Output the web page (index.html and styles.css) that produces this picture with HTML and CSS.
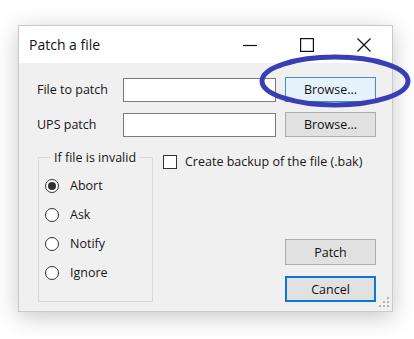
FILE: index.html
```html
<!DOCTYPE html>
<html lang="en">
<head>
    <meta charset="UTF-8">
    <meta name="viewport" content="width=device-width, initial-scale=1.0">
    <title>Patch a file</title>
    <link rel="stylesheet" href="styles.css">
</head>
<body>

    <div class="window">
        <!-- Title Bar -->
        <div class="titlebar">
            <span class="title">Patch a file</span>
            <div class="caption-btn">
                <svg width="14" height="14" viewBox="0 0 14 14"><path d="M0 7.5h14" stroke="#111" stroke-width="1.2"/></svg>
            </div>
            <div class="caption-btn">
                <svg width="14" height="14" viewBox="0 0 14 14"><rect x="0.6" y="0.6" width="12.8" height="12.8" fill="none" stroke="#111" stroke-width="1.2"/></svg>
            </div>
            <div class="caption-btn">
                <svg width="14" height="14" viewBox="0 0 14 14"><path d="M0.5 0.5L13.5 13.5M13.5 0.5L0.5 13.5" stroke="#111" stroke-width="1.2"/></svg>
            </div>
        </div>

        <!-- Dialog Body -->
        <div class="content">
            <div class="file-grid">
                <label class="field-label">File to patch</label>
                <div class="textbox"></div>
                <button class="btn btn-hover">Browse...</button>

                <label class="field-label">UPS patch</label>
                <div class="textbox"></div>
                <button class="btn">Browse...</button>
            </div>

            <div class="lower">
                <fieldset class="groupbox">
                    <legend>If file is invalid</legend>
                    <div class="radio-row"><span class="radio checked"></span>Abort</div>
                    <div class="radio-row"><span class="radio"></span>Ask</div>
                    <div class="radio-row"><span class="radio"></span>Notify</div>
                    <div class="radio-row"><span class="radio"></span>Ignore</div>
                </fieldset>

                <div class="right-col">
                    <div class="check-row"><span class="checkbox"></span>Create backup of the file (.bak)</div>
                    <div class="actions">
                        <button class="btn">Patch</button>
                        <button class="btn btn-default">Cancel</button>
                    </div>
                </div>
            </div>
        </div>

        <!-- Size Grip -->
        <svg class="grip" width="10" height="10" viewBox="0 0 10 10">
            <g fill="#b4b4b4">
                <rect x="8" y="0" width="2" height="2"/>
                <rect x="4" y="4" width="2" height="2"/>
                <rect x="8" y="4" width="2" height="2"/>
                <rect x="0" y="8" width="2" height="2"/>
                <rect x="4" y="8" width="2" height="2"/>
                <rect x="8" y="8" width="2" height="2"/>
            </g>
        </svg>
    </div>

    <!-- Hand drawn highlight around the Browse button -->
    <svg class="highlight" width="414" height="339" viewBox="0 0 414 339">
        <ellipse cx="335" cy="81" rx="73" ry="24" fill="none" stroke="#3a3db3" stroke-width="5"/>
    </svg>

</body>
</html>
```

FILE: styles.css
```css
/* Reset and Base Styles */
* {
    margin: 0;
    padding: 0;
    box-sizing: border-box;
}

body {
    font-family: "Open Sans", "Liberation Sans", sans-serif;
    font-size: 12.5px;
    color: #161616;
    background-color: #fff;
    width: 414px;
    height: 339px;
    padding: 25px 0 0 18px;
    position: relative;
    overflow: hidden;
}

/* Dialog Window */
.window {
    width: 375px;
    height: 287px;
    background-color: #f0f0f0;
    border: 1px solid #c9c9c9;
    box-shadow: 0 5px 22px rgba(0, 0, 0, 0.22);
    display: flex;
    flex-direction: column;
    position: relative;
}

/* Title Bar */
.titlebar {
    height: 37px;
    background-color: #fff;
    display: flex;
    align-items: center;
}

.title {
    flex: 1;
    padding-left: 10px;
    font-size: 14px;
    color: #111;
}

.caption-btn {
    width: 57px;
    height: 100%;
    display: flex;
    align-items: center;
    justify-content: center;
}

/* Body */
.content {
    flex: 1;
    padding: 14px 16px 9px 18px;
    display: flex;
    flex-direction: column;
}

.file-grid {
    display: grid;
    grid-template-columns: 77px 153px 91px;
    grid-auto-rows: 25px;
    column-gap: 9px;
    row-gap: 10px;
    align-items: center;
}

.field-label {
    white-space: nowrap;
}

.textbox {
    height: 24px;
    background-color: #fff;
    border: 1px solid #7a7a7a;
}

.btn {
    height: 25px;
    font-family: inherit;
    font-size: inherit;
    color: #111;
    background-color: #e1e1e1;
    border: 1px solid #adadad;
}

.btn-hover {
    background-color: #e5f1fb;
    border-color: #3c8fd6;
}

.btn-default {
    border: 2px solid #0a78d4;
}

/* Lower Section */
.lower {
    flex: 1;
    display: flex;
    gap: 10px;
    margin-top: 12px;
    margin-left: 1px;
}

.groupbox {
    width: 115px;
    border: 1px solid #d9d9d9;
    padding: 5px 6px 0;
}

.groupbox legend {
    margin-left: 5px;
    padding: 0 3px 0 4px;
}

.radio-row {
    height: 29px;
    display: flex;
    align-items: center;
    gap: 11px;
}

.radio {
    width: 14px;
    height: 14px;
    border: 1px solid #333;
    border-radius: 50%;
    background-color: #fff;
    display: flex;
    align-items: center;
    justify-content: center;
}

.radio.checked::after {
    content: "";
    width: 8px;
    height: 8px;
    border-radius: 50%;
    background-color: #333;
}

.right-col {
    flex: 1;
    display: flex;
    flex-direction: column;
    justify-content: space-between;
}

.check-row {
    display: flex;
    align-items: center;
    gap: 8px;
    margin-top: 4px;
    white-space: nowrap;
}

.checkbox {
    width: 14px;
    height: 14px;
    border: 1px solid #333;
    background-color: #fff;
}

.actions {
    display: flex;
    flex-direction: column;
    align-items: flex-end;
    gap: 11px;
}

.actions .btn {
    width: 91px;
    height: 26px;
}

.grip {
    position: absolute;
    right: 3px;
    bottom: 4px;
}

.highlight {
    position: absolute;
    left: 0;
    top: 0;
    pointer-events: none;
}
```
